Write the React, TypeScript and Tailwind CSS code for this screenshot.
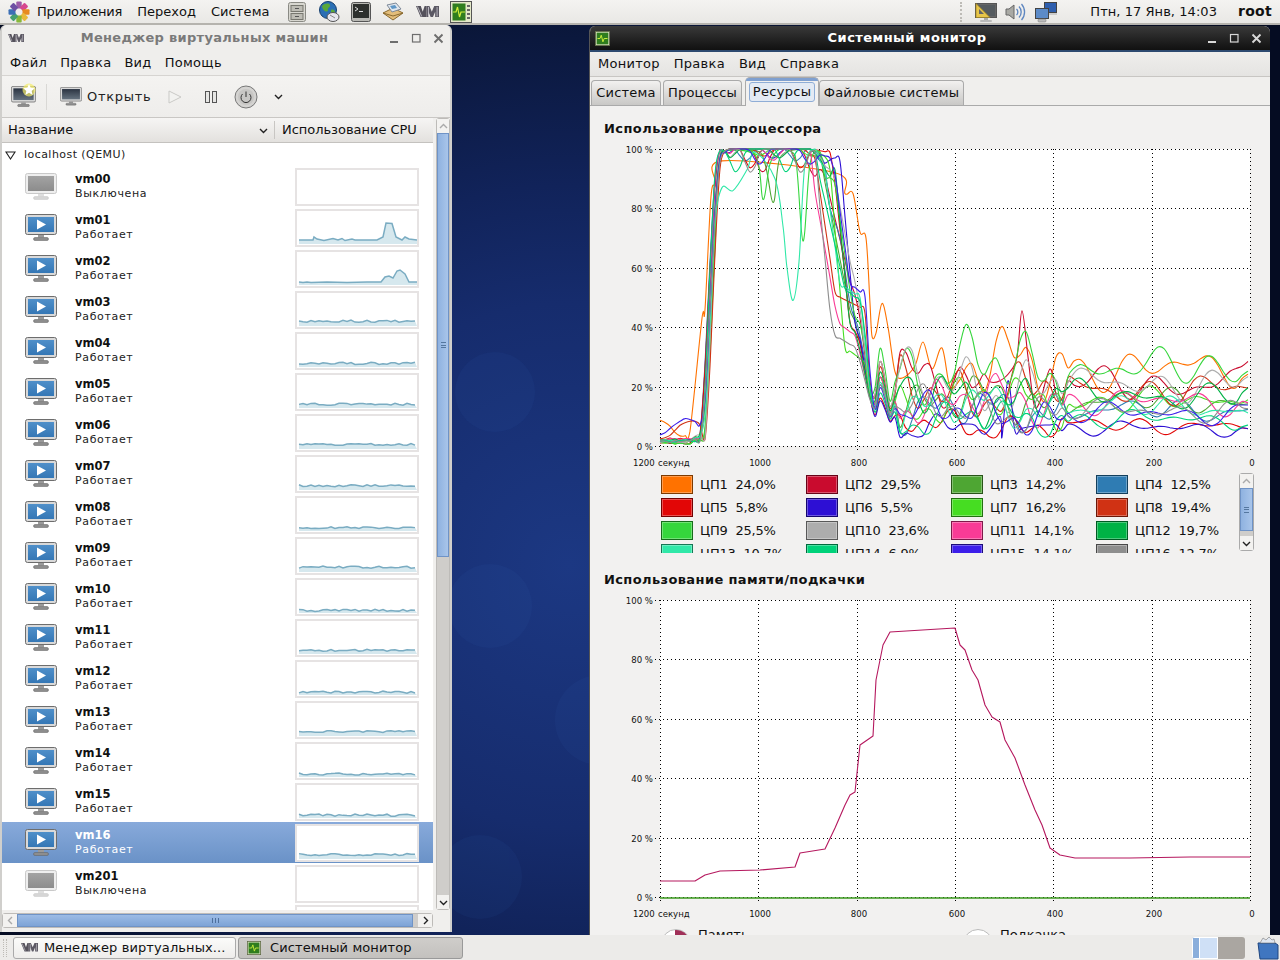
import React from "react";

type P = [number, number];

function rng(seed: number) {
  let a = seed * 2654435761 + 12345;
  return () => {
    a |= 0; a = (a + 0x6d2b79f5) | 0;
    let t = Math.imul(a ^ (a >>> 15), 1 | a);
    t = (t + Math.imul(t ^ (t >>> 7), 61 | t)) ^ t;
    return ((t ^ (t >>> 14)) >>> 0) / 4294967296;
  };
}

function smooth(pts: P[], minY = -1e9, maxY = 1e9) {
  let d = `M${pts[0][0]} ${pts[0][1]}`;
  const cl = (v: number) => Math.min(maxY, Math.max(minY, v));
  for (let i = 0; i < pts.length - 1; i++) {
    const p0 = pts[Math.max(0, i - 1)], p1 = pts[i], p2 = pts[i + 1], p3 = pts[Math.min(pts.length - 1, i + 2)];
    d += `C${(p1[0] + (p2[0] - p0[0]) / 6).toFixed(1)} ${cl(p1[1] + (p2[1] - p0[1]) / 6).toFixed(1)} ${(p2[0] - (p3[0] - p1[0]) / 6).toFixed(1)} ${cl(p2[1] - (p3[1] - p1[1]) / 6).toFixed(1)} ${p2[0]} ${p2[1]}`;
  }
  return d;
}

const cpus = [
  { label: "ЦП1", val: "24,0%", c: "#ff7200", sw: "bg-[#ff7200] border-[#7d3a00]", mean: 26, end: 24 },
  { label: "ЦП2", val: "29,5%", c: "#c90b2e", sw: "bg-[#c90b2e] border-[#660317]", mean: 21, end: 29.5 },
  { label: "ЦП3", val: "14,2%", c: "#4ea633", sw: "bg-[#4ea633] border-[#285418]", mean: 15, end: 14.2 },
  { label: "ЦП4", val: "12,5%", c: "#2f7cb3", sw: "bg-[#2f7cb3] border-[#133f5c]", mean: 12, end: 12.5 },
  { label: "ЦП5", val: "5,8%", c: "#e20606", sw: "bg-[#e20606] border-[#730202]", mean: 7, end: 5.8 },
  { label: "ЦП6", val: "5,5%", c: "#2d0fd4", sw: "bg-[#2d0fd4] border-[#14056e]", mean: 6, end: 5.5 },
  { label: "ЦП7", val: "16,2%", c: "#46dd22", sw: "bg-[#46dd22] border-[#217010]", mean: 15, end: 16.2 },
  { label: "ЦП8", val: "19,4%", c: "#d03214", sw: "bg-[#d03214] border-[#6b1708]", mean: 19, end: 19.4 },
  { label: "ЦП9", val: "25,5%", c: "#35d63c", sw: "bg-[#35d63c] border-[#176b1b]", mean: 26, end: 25.5 },
  { label: "ЦП10", val: "23,6%", c: "#adadad", sw: "bg-[#adadad] border-[#585858]", mean: 21, end: 23.6 },
  { label: "ЦП11", val: "14,1%", c: "#f93b96", sw: "bg-[#f93b96] border-[#7e1a4a]", mean: 15, end: 14.1 },
  { label: "ЦП12", val: "19,7%", c: "#00b245", sw: "bg-[#00b245] border-[#005a22]", mean: 17, end: 19.7 },
  { label: "ЦП13", val: "10,7%", c: "#30e8a8", sw: "bg-[#30e8a8] border-[#177555]", mean: 13, end: 10.7 },
  { label: "ЦП14", val: "6,9%", c: "#00d27a", sw: "bg-[#00d27a] border-[#006a3d]", mean: 9, end: 6.9 },
  { label: "ЦП15", val: "14,1%", c: "#3c1eea", sw: "bg-[#3c1eea] border-[#1c0c78]", mean: 11, end: 14.1 },
  { label: "ЦП16", val: "12,7%", c: "#8e8e8e", sw: "bg-[#8e8e8e] border-[#484848]", mean: 12, end: 12.7 },
];

const vy = (v: number) => 446 - (v / 100) * 297;

const pins: Record<number, P[]> = {
  0: [[690, 5], [702, 43], [705, 46], [711, 84], [716, 88], [722, 96], [835, 92], [845, 85], [853, 85], [860, 72], [866, 70], [870, 48], [872, 37], [876, 38], [882, 48], [888, 40], [895, 25], [903, 23], [915, 27], [923, 35], [932, 26], [942, 33], [950, 20]],
  12: [[722, 87], [733, 86], [747, 93], [755, 99], [775, 90], [783, 74], [787, 60], [793, 49], [799, 62], [805, 95], [815, 100]],
  8: [[722, 99], [755, 98], [763, 83], [770, 95], [780, 100], [795, 98], [803, 69], [810, 95], [820, 99]],
  2: [[722, 99], [760, 99], [773, 82], [780, 97], [800, 100]],
  1: [[1000, 22], [1010, 25], [1017, 30], [1022, 45.5], [1028, 30], [1034, 14], [1040, 15]],
  5: [[975, 7], [985, 4], [1000, 10], [1002, 3], [1008, 22], [1015, 5], [1022, 6], [1040, 7]],
  3: [[830, 80], [840, 70], [850, 48], [858, 40]],
};

function cpuPoints(i: number): P[] {
  const r = rng(i + 11);
  const c = cpus[i];
  const rise0 = 697 + r() * 8;
  const rise1 = 717 + r() * 6;
  const fall1 = 832 + r() * 24;
  const fall0 = fall1 - 14 - r() * 16;
  const plateauAmp = 1 + r() * 8;
  const drift = r() * 12;
  const ph1 = r() * 6, ph2 = r() * 6, ph3 = r() * 6;
  const low = 0.5 + r() * 1.5;
  const knee = 28 + r() * 26;
  const kneeEnd = Math.max(fall1 + 5, 856 + r() * 10);
  const pts: P[] = [];
  const pin = pins[i] || [];
  for (let x = 660; x <= 1250; x += x >= 900 ? 6 : 5) {
    if (pin.some((p) => Math.abs(p[0] - x) < 5)) continue;
    if (pin.length > 3 && x >= pin[0][0] && x <= pin[pin.length - 1][0]) continue;
    let v: number;
    if (x < rise0) {
      v = low + r() * 0.8 + (i % 7 === 0 ? 3 * Math.sin(x / 9 + ph1) + 4 : 0) + (x > 690 ? r() * 2 : 0);
    } else if (x < rise1) {
      const t = (x - rise0) / (rise1 - rise0);
      v = low + t * t * (3 - 2 * t) * (97 - low);
    } else if (x < fall0) {
      const s = Math.max(0, Math.sin(x / 8 + ph1));
      v = 100 - s * s * plateauAmp;
      if (x < 730) v = 100 - r() * 1.5;
      if (x > 810) v -= ((x - 810) / 30) * drift;
    } else if (x < fall1) {
      const t = (x - fall0) / (fall1 - fall0);
      v = (100 - drift * 0.6) * (1 - t) + (knee + 5) * t;
    } else if (x < kneeEnd) {
      v = knee + 5 - ((x - fall1) / (kneeEnd - fall1)) * 5;
    } else if (x < 872) {
      v = knee - ((x - kneeEnd) / Math.max(1, 872 - kneeEnd)) * (knee - 13);
    } else if (x < 900) {
      const bump = (1 - Math.cos(((x - 872) / 18) * Math.PI * 2)) / 2;
      v = 6 + c.mean * 0.35 + (x < 890 ? bump * (4 + c.mean * 0.55) : 0) + (x >= 890 ? (c.mean * 0.5 * (x - 890)) / 10 : 0);
    } else {
      const long = x >= 1065;
      const amp = long ? 4.5 : 9;
      const w = Math.sin(x / (long ? 7 : 4.6) + ph1) * 0.55 + Math.sin(x / 10 + ph2) * 0.6 + Math.sin(x / 27 + ph3) * 0.4;
      v = c.mean + w * amp * (0.25 + c.mean / 28);
      if (x > 1235) v = v + (c.end - v) * ((x - 1235) / 15);
      v = Math.max(3, v);
    }
    pts.push([x, vy(Math.min(100, Math.max(0, v)))]);
  }
  for (const p of pin) pts.push([p[0], vy(p[1])]);
  pts.sort((a, b) => a[0] - b[0]);
  return pts;
}

const memPts: P[] = [[660, 881], [695, 881], [705, 875], [720, 871], [760, 870], [795, 867], [800, 853], [825, 849], [835, 828], [845, 805], [850, 795], [855, 792], [860, 745], [873, 736], [876, 680], [883, 645], [890, 632], [955, 628], [960, 645], [965, 650], [972, 670], [978, 680], [985, 705], [992, 717], [1000, 722], [1005, 740], [1015, 758], [1025, 785], [1035, 810], [1042, 825], [1050, 848], [1060, 855], [1075, 858], [1130, 858], [1190, 857], [1250, 857]];

const xTicks: [number, string][] = [[758, "1000"], [857, "800"], [955, "600"], [1053, "400"], [1152, "200"], [1250, "0"]];

function ChartFrame({ top, children, ox, oy }: { top: number; children: React.ReactNode; ox: number; oy: number }) {
  const bottom = top + 297;
  const ys = [0, 20, 40, 60, 80, 100].map((v) => ({ v, y: Math.round(bottom - (v / 100) * 297) }));
  return (
    <svg width={670} height={330} className="block shrink-0" style={{ fontFamily: "'DejaVu Sans', sans-serif" }}>
      <g transform={`translate(${-ox},${-oy})`}>
        <rect x={660} y={top} width={590} height={297} fill="#fff" />
        <g stroke="#000" strokeWidth={1} strokeDasharray="1 3" shapeRendering="crispEdges">
          {ys.map((t) => <line key={t.v} x1={655} x2={1251} y1={t.y + 0.5} y2={t.y + 0.5} />)}
          <line x1={660.5} x2={660.5} y1={top} y2={bottom + 6} />
          {xTicks.map(([x]) => <line key={x} x1={x + 0.5} x2={x + 0.5} y1={top} y2={bottom + 6} />)}
        </g>
        {children}
        <g fontSize={9.5} fill="#111" style={{ fontStretch: "condensed" }}>
          {ys.map((t) => <text key={t.v} x={653} y={t.y + 4} textAnchor="end">{t.v} %</text>)}
          <text x={633} y={bottom + 20}>1200</text>
          <text x={658} y={bottom + 20}>секунд</text>
          {xTicks.map(([x, l]) => <text key={x} x={x + 2} y={bottom + 20} textAnchor="middle">{l}</text>)}
        </g>
      </g>
    </svg>
  );
}

function CpuChart() {
  return (
    <ChartFrame top={149} ox={590} oy={141}>
      <g fill="none" strokeWidth={1.1} strokeLinejoin="round">
        {cpus.map((c, i) => <path key={c.label} d={smooth(cpuPoints(i), 149, 446)} stroke={c.c} />)}
      </g>
    </ChartFrame>
  );
}

function MemChart() {
  return (
    <ChartFrame top={600} ox={590} oy={592}>
      <path d={"M" + memPts.map((p) => p.join(" ")).join("L")} fill="none" stroke="#b5185e" strokeWidth={1.1} strokeLinejoin="round" />
      <line x1={660} x2={1250} y1={898} y2={898} stroke="#3a9a1e" strokeWidth={1.3} />
    </ChartFrame>
  );
}

function Spark({ idx, off }: { idx: number; off?: boolean }) {
  const r = rng(idx + 101);
  let pts: P[] = [];
  if (idx === 1) {
    pts = [[2, 29], [16, 29], [17, 26], [20, 28], [27, 29.5], [36, 27.5], [41, 29], [45, 27.5], [48, 29.5], [55, 28], [58, 29], [80, 29], [86, 26], [89, 12], [95, 12.5], [99, 26], [105, 29], [108, 26], [112, 28], [120, 29]];
  } else if (idx === 2) {
    pts = [[2, 30], [6, 30.5], [10, 30], [14, 30.5], [30, 30], [50, 30.5], [70, 30], [84, 30], [88, 25], [92, 24], [96, 26], [100, 19], [103, 18], [108, 22], [112, 30], [120, 30]];
  } else if (!off) {
    const base = 28 + r() * 2.5;
    for (let x = 2; x <= 120; x += 4) pts.push([x, base + (r() - 0.5) * 2.2]);
  }
  const line = off ? "" : "M" + pts.map((p) => p.join(" ")).join("L");
  return (
    <div className="w-[124px] h-[38px] bg-white border-2 border-[#e6e3e3] shrink-0">
      {!off && (
        <svg width={120} height={34} className="block">
          <path d={`${line}L120 33L2 33Z`} fill="#d6e8ee" />
          <path d={line} fill="none" stroke="#7aacc2" strokeWidth={1.5} />
        </svg>
      )}
    </div>
  );
}

function VmIcon({ state, w = 32 }: { state: "on" | "off" | "dark"; w?: number }) {
  const on = state !== "off";
  const id = `scr-${state}`;
  const a = { on: "#4f8fc9", off: "#a3a3a3", dark: "#2b3442" }[state];
  const b = { on: "#3577b5", off: "#8c8c8c", dark: "#65727f" }[state];
  return (
    <svg width={w} height={(w * 27) / 32} viewBox="0 0 32 27" className="block">
      <defs>
        <linearGradient id={id} x1="0" y1="0" x2="0" y2="1">
          <stop offset="0" stopColor={a} />
          <stop offset="1" stopColor={b} />
        </linearGradient>
      </defs>
      <rect x={0.5} y={0.5} width={31} height={20} rx={2} fill={on ? "#d9d9d9" : "#eeeeee"} stroke={on ? "#6d6d6d" : "#c9c9c9"} />
      <rect x={3} y={3} width={26} height={15} fill={`url(#${id})`} />
      <rect x={13} y={21} width={6} height={2.5} fill={on ? "#9a9a9a" : "#dedede"} />
      <rect x={8.5} y={23.5} width={15} height={3} rx={1.5} fill={on ? "#8d8d8d" : "#d6d6d6"} stroke={on ? "#5f5f5f" : "#c8c8c8"} strokeWidth={0.5} />
      {state === "on" && <path d="M12 5.5l9 5-9 5z" fill="#fff" />}
    </svg>
  );
}

function VmLogo({ w = 16 }: { w?: number }) {
  return (
    <svg width={w} height={w * 0.5} viewBox="0 0 24 12" className="block">
      <path d="M0 0h5l2 6 2-6h2v12H9L8 12H5z" fill="#55525c" />
      <path d="M11 0h3l2.500 6L19 0h5v12h-4V6l-2.500 6h-2L13 6v6h-2z" fill="#5c5964" />
      <path d="M1.500 0.500L6 11M13 1v10M22 1v10" stroke="#c8c6ce" strokeWidth={0.9} fill="none" />
    </svg>
  );
}

function MonIcon({ s = 18 }: { s?: number }) {
  return (
    <svg width={s} height={s} viewBox="0 0 18 18" className="block">
      <rect x={0.5} y={0.5} width={17} height={17} fill="#dfe6c4" stroke="#5f6b45" />
      <rect x={2} y={2} width={14} height={14} fill="#2f7d1e" />
      <path d="M3 9h3l1.500-4 2 8 1.500-4h4" fill="none" stroke="#c8ec3a" strokeWidth={1.2} />
    </svg>
  );
}

function Flower() {
  const cols = ["#9c5aa8", "#d6478f", "#e88a1f", "#e9b93a", "#88b83a", "#46a070", "#3b6fb5", "#6e4fa3"];
  return (
    <svg width={22} height={22} viewBox="-11 -11 22 22" className="block">
      {cols.map((c, i) => (
        <rect key={c} x={-2.7} y={-10.5} width={5.4} height={7} rx={1} fill={c} transform={`rotate(${i * 45})`} />
      ))}
      <circle r={2.5} fill="#f0ecf0" />
    </svg>
  );
}

function PanelIcons() {
  return (
    <div className="flex items-center ml-[17px] gap-[11px]">
      <svg width={20} height={20} viewBox="0 0 20 20"><rect x={1.500} y={0.500} width={17} height={19} rx={2} fill="#d8d7d0" stroke="#8a8a84" /><rect x={4} y={3.500} width={12} height={6} fill="#bdbcb4" stroke="#77776f" /><rect x={4} y={11.500} width={12} height={6} fill="#bdbcb4" stroke="#77776f" /><rect x={8} y={6} width={4} height={1} fill="#555" /><rect x={8} y={14} width={4} height={1} fill="#555" /></svg>
      <svg width={22} height={22} viewBox="0 0 22 22"><circle cx={10} cy={9} r={8.500} fill="#2b6fb5" stroke="#17406e" /><path d="M4 5c3-3 7-3 8-1s-3 3-2 5-5 3-6-4zM13 9c2-1 4 0 4 2s-3 3-4 1z" fill="#5aa83a" /><ellipse cx={15} cy={16} rx={6} ry={4.500} fill="#e6e6ee" stroke="#555" /><path d="M12 14l5 3" stroke="#888" /></svg>
      <svg width={20} height={20} viewBox="0 0 20 20"><rect x={0.500} y={0.500} width={19} height={19} rx={2} fill="#b9b9b4" stroke="#555" /><rect x={2} y={2} width={16} height={14} fill="#2d302d" /><path d="M4 5l3 2-3 2" fill="none" stroke="#ddd" /><rect x={8} y={9} width={4} height={1} fill="#ddd" /></svg>
      <svg width={22} height={20} viewBox="0 0 22 20"><path d="M1 11l10-5 10 5-10 7z" fill="#e3bd7a" stroke="#8a6a30" /><path d="M5 3l9-2 5 6-9 3z" fill="#dfe6ee" stroke="#7f8a99" /><path d="M8 4l5-1 2 3-5 1z" fill="#5f97c7" /><path d="M1 11l10 3 10-3" fill="none" stroke="#8a6a30" /></svg>
      <div className="ml-[1px]"><VmLogo w={23} /></div>
      <svg width={22} height={22} viewBox="0 0 22 22"><rect x={0.500} y={0.500} width={21} height={21} fill="#e4e8c8" stroke="#555" /><rect x={2.500} y={2.500} width={13} height={17} fill="#2f7d1e" /><path d="M3 11h3l1.500-5 2 10 1.500-5h4" fill="none" stroke="#d4ef3a" strokeWidth={1.2} /><rect x={17} y={4} width={3} height={2} fill="#666" /><rect x={17} y={8} width={3} height={2} fill="#666" /><rect x={17} y={12} width={3} height={2} fill="#666" /><rect x={17} y={16} width={3} height={2} fill="#666" /></svg>
    </div>
  );
}

function TrayIcons() {
  return (
    <div className="flex items-center gap-[7px]">
      <div className="w-[3px] h-[20px] border-l-2 border-dotted border-[#bdbbb6] mr-[5px]" />
      <svg width={22} height={22} viewBox="0 0 22 22"><rect x={0.500} y={2.500} width={21} height={14} fill="#666" stroke="#555" /><rect x={2} y={4} width={18} height={11} fill="#555b5f" /><path d="M1 2.500v14h14z" fill="#e8c64a" stroke="#9b7f1e" strokeWidth={0.7} /><path d="M4 8v5h5z" fill="#666" /><rect x={9} y={17} width={4} height={2} fill="#aaa" /><rect x={5} y={19} width={12} height={2} rx={1} fill="#bbb" /></svg>
      <svg width={22} height={22} viewBox="0 0 22 22"><path d="M2 8h3l5-4v14l-5-4H2z" fill="#a9a9a4" stroke="#666" /><path d="M12.500 8a4 4 0 010 6M15 5.500a8 8 0 010 11M17.500 3a12 12 0 010 16" fill="none" stroke="#5d86c0" strokeWidth={1.3} /></svg>
      <svg width={24} height={22} viewBox="0 0 24 22" className="ml-[1px]"><rect x={10.500} y={1.500} width={12} height={10} fill="#2f5fae" stroke="#444" /><rect x={1.500} y={7.500} width={13} height={10} fill="#5c8bc8" stroke="#444" /><rect x={4} y={18} width={8} height={3} rx={1} fill="#bbb" stroke="#777" strokeWidth={0.5} /><rect x={15} y={12} width={8} height={2} fill="#ccc" /></svg>
    </div>
  );
}

function TitleButtons({ light }: { light?: boolean }) {
  const c = light ? "#d8d8d8" : "#6e6e6e";
  return (
    <div className="flex items-center gap-[11px] shrink-0">
      <svg width={11} height={11} viewBox="0 0 11 11"><rect x={1} y={8} width={8} height={2} fill={c} /></svg>
      <svg width={11} height={11} viewBox="0 0 11 11"><rect x={1.500} y={1.500} width={7.500} height={7.500} fill="none" stroke={c} strokeWidth={1.2} /></svg>
      <svg width={11} height={11} viewBox="0 0 11 11"><path d="M1.500 1.500l8 8M9.500 1.500l-8 8" stroke={c} strokeWidth={1.9} /></svg>
    </div>
  );
}

function Chevron({ dir, c = "#222" }: { dir: "u" | "d" | "l" | "r"; c?: string }) {
  const d = { u: "M2 7l3.500-3.500L9 7", d: "M2 4l3.500 3.500L9 4", l: "M7 2L3.500 5.500 7 9", r: "M4 2l3.500 3.500L4 9" }[dir];
  return <svg width={11} height={11} viewBox="0 0 11 11" className="block"><path d={d} fill="none" stroke={c} strokeWidth={1.4} /></svg>;
}

const vms = Array.from({ length: 17 }, (_, i) => ({ name: `vm${String(i).padStart(2, "0")}`, on: i > 0 })).concat([{ name: "vm201", on: false }]);

function VmRow({ name, on, idx, selected }: { name: string; on: boolean; idx: number; selected: boolean }) {
  return (
    <div className={`flex items-center h-[41px] shrink-0 pl-[23px] ${selected ? "bg-gradient-to-b from-[#88aadb] to-[#6a92c7]" : "bg-white"}`}>
      <div className="w-[50px] shrink-0"><VmIcon state={on ? "on" : "off"} /></div>
      <div className="flex-1 min-w-0">
        <div className={`text-[11.5px] h-[14px] leading-[12px] font-bold ${selected ? "text-white" : "text-[#111]"}`}>{name}</div>
        <div className={`text-[11px] leading-[14px] tracking-[0.65px] ${selected ? "text-white" : "text-[#222]"}`}>{on ? "Работает" : "Выключена"}</div>
      </div>
      <div className="mr-[14px]"><Spark idx={idx} off={!on} /></div>
    </div>
  );
}

function VmWindow() {
  return (
    <div className="absolute left-0 top-0 w-[452px] h-[907px] flex flex-col bg-[#f0efed] border-x-2 border-[#d0cfcc] rounded-t-[6px] overflow-hidden">
      <div className="h-[26px] shrink-0 flex items-center pl-[6px] pr-[6px] bg-[#efeeec]">
        <VmLogo w={16} />
        <div className="flex-1 text-center text-[13px] font-bold tracking-[0.3px] text-[#7a7a7a] pr-[4px]">Менеджер виртуальных машин</div>
        <TitleButtons />
      </div>
      <div className="h-[25px] shrink-0 flex items-center gap-[13px] pl-[8px] text-[13px] tracking-[0.3px] text-[#111] bg-[#efeeec] border-b border-[#d6d4d1]">
        <span>Файл</span><span>Правка</span><span>Вид</span><span>Помощь</span>
      </div>
      <div className="h-[42px] shrink-0 flex items-center pl-[9px] bg-gradient-to-b from-[#f4f3f1] to-[#eeedeb] border-b border-[#c9c7c4] text-[13px] text-[#222]">
        <div className="relative w-[25px]">
          <VmIcon state="dark" w={25} />
          <svg width={14} height={14} viewBox="0 0 14 14" className="absolute -top-[3px] left-[11px]"><circle cx={7} cy={7} r={6.500} fill="#f4ec6a" opacity={0.7} /><path d="M7 1l1.700 3.800 4 .4-3 2.700.9 4L7 9.800 3.400 11.900l.9-4-3-2.700 4-.4z" fill="#fff" /></svg>
        </div>
        <div className="w-px h-[26px] bg-[#d9d8d5] ml-[10px] mr-[13px]" />
        <VmIcon state="dark" w={22} />
        <span className="ml-[5px] tracking-[0.7px]">Открыть</span>
        <svg width={14} height={14} viewBox="0 0 14 14" className="ml-[17px]"><path d="M1 1l12 6-12 6z" fill="#f2f2f0" stroke="#c9c9c6" /></svg>
        <svg width={14} height={14} viewBox="0 0 14 14" className="ml-[22px]"><rect x={1.500} y={1.500} width={4} height={11} fill="#e6e6e4" stroke="#555" /><rect x={8.500} y={1.500} width={4} height={11} fill="#e6e6e4" stroke="#555" /></svg>
        <svg width={24} height={24} viewBox="0 0 24 24" className="ml-[16px]"><circle cx={12} cy={12} r={11} fill="#d4d3d1" stroke="#777" /><circle cx={12} cy={12} r={8} fill="#c7c6c4" /><path d="M8.500 9a5 5 0 107 0M12 6.500V12" fill="none" stroke="#333" strokeWidth={1} /></svg>
        <div className="ml-[15px]"><Chevron dir="d" /></div>
      </div>
      <div className="flex flex-1 min-h-0">
        <div className="flex flex-col w-[431px] shrink-0 min-h-0">
          <div className="h-[25px] shrink-0 flex items-center text-[13px] text-[#111] bg-gradient-to-b from-[#f6f5f4] to-[#e3e1de] border-b border-[#c4c2bf]">
            <span className="pl-[6px] flex-1">Название</span>
            <div className="mr-[5px]"><Chevron dir="d" /></div>
            <div className="w-px h-[18px] bg-[#c8c6c3]" />
            <span className="w-[158px] pl-[7px] tracking-[-0.03px]">Использование CPU</span>
          </div>
          <div className="flex-1 min-h-0 overflow-hidden bg-white flex flex-col">
            <div className="h-[23px] shrink-0 flex items-center pl-[3px] pt-[1px] text-[11px] tracking-[0.45px] text-[#222]">
              <svg width={11} height={9} viewBox="0 0 11 9" className="mr-[8px]"><path d="M1 1h9L5.500 8z" fill="none" stroke="#222" strokeWidth={1.1} /></svg>
              localhost (QEMU)
            </div>
            {vms.map((v, i) => <VmRow key={v.name} name={v.name} on={v.on} idx={i} selected={i === 16} />)}
            <div className="h-[41px] shrink-0 pl-[293px] pt-[1px] bg-white"><Spark idx={99} off /></div>
          </div>
        </div>
        <div className="ml-[3px] w-[15px] flex flex-col bg-[#cfcdca] border border-[#bdbbb8] rounded-[3px]">
          <div className="h-[14px] bg-[#f3f2f0] flex items-center justify-center shrink-0"><Chevron dir="u" c="#aaa" /></div>
          <div className="h-[424px] bg-gradient-to-r from-[#8fb2e0] to-[#a9c5ea] border border-[#6f93c6] shrink-0 flex items-center justify-center">
            <div className="w-[5px] h-[6px] border-y border-[#55779f] flex items-center"><div className="w-full h-px bg-[#55779f]" /></div>
          </div>
          <div className="flex-1" />
          <div className="h-[14px] bg-[#f3f2f0] flex items-center justify-center shrink-0"><Chevron dir="d" /></div>
        </div>
      </div>
      <div className="h-[22px] shrink-0 pt-[3px] pb-[4px] pr-[17px]">
        <div className="h-full flex bg-[#cfcdca] border border-[#bdbbb8] rounded-[3px]">
          <div className="w-[14px] bg-[#f3f2f0] flex items-center justify-center shrink-0"><Chevron dir="l" c="#aaa" /></div>
          <div className="w-[396px] bg-gradient-to-b from-[#9cbce6] to-[#7da3d6] border border-[#6f93c6] flex items-center justify-center gap-[1px]">
            <div className="w-px h-[5px] bg-[#4d6f9c]" /><div className="w-px h-[5px] bg-[#4d6f9c] mx-[1px]" /><div className="w-px h-[5px] bg-[#4d6f9c]" />
          </div>
          <div className="flex-1" />
          <div className="w-[14px] bg-[#f3f2f0] flex items-center justify-center shrink-0"><Chevron dir="r" /></div>
        </div>
      </div>
    </div>
  );
}

function Tab({ label, active, w }: { label: string; active?: boolean; w: string }) {
  if (active) {
    return (
      <div className={`${w} h-[29px] shrink-0 rounded-t-[5px] border border-b-0 border-[#aaa] bg-[#f2f1f0] relative`}>
        <div className="h-[3px] rounded-t-[4px] bg-[#7fa0d0]" />
        <div className="mx-[3px] mt-[1px] h-[20px] rounded-[3px] border border-[#8fadd6] bg-[#e3eaf4] flex items-center justify-center text-[13px] tracking-[0.3px] text-[#111]">{label}</div>
      </div>
    );
  }
  return (
    <div className={`${w} h-[25px] shrink-0 rounded-t-[4px] border border-[#aaa] border-b-0 bg-gradient-to-b from-[#f2f1f0] to-[#c9c8c6] flex items-center justify-center text-[13px] tracking-[0.2px] text-[#111]`}>{label}</div>
  );
}

function MonitorWindow() {
  return (
    <div className="absolute left-[589px] top-[1px] w-[681px] h-[930px] flex flex-col bg-[#f0efed] border-l border-[#555] rounded-t-[6px] overflow-hidden">
      <div className="h-[26px] shrink-0 flex items-center pl-[5px] pr-[8px] bg-gradient-to-b from-[#3a3a3a] to-[#111] border-b-2 border-[#2d4a70]">
        <MonIcon s={15} />
        <div className="flex-1 text-center text-[13px] font-bold tracking-[0.45px] text-white pr-[3px]">Системный монитор</div>
        <TitleButtons light />
      </div>
      <div className="h-[25px] shrink-0 flex items-center gap-[14px] pl-[8px] text-[13px] tracking-[0.27px] text-[#111] bg-gradient-to-b from-[#efeeec] to-[#e5e4e2] border-b border-[#c8c6c3]">
        <span>Монитор</span><span>Правка</span><span>Вид</span><span>Справка</span>
      </div>
      <div className="h-[29px] shrink-0 flex items-end pl-[1px] gap-[2px] border-b border-[#aaa]">
        <Tab label="Система" w="w-[70px]" />
        <Tab label="Процессы" w="w-[79px]" />
        <div className="ml-[1px] -mb-px"><Tab label="Ресурсы" active w="w-[74px]" /></div>
        <div className="-ml-[2px]"><Tab label="Файловые системы" w="w-[145px]" /></div>
      </div>
      <div className="flex-1 min-h-0 overflow-hidden bg-[#f2f1f0] flex flex-col">
        <h2 className="ml-[14px] mt-[14px] mb-[3px] h-[18px] leading-[18px] text-[13px] font-bold tracking-[0.43px] text-[#111]">Использование процессора</h2>
        <CpuChart />
        <div className="flex ml-[71px] mt-[2px] h-[80px] shrink-0">
          <div className="w-[578px] overflow-hidden grid grid-cols-[145px_145px_145px_145px] auto-rows-[23px] content-start">
            {cpus.map((c) => (
              <div key={c.label} className="flex items-center h-[23px] text-[13px] tracking-[-0.2px] text-[#111]">
                <div className={`w-[32px] h-[19px] border shrink-0 shadow-[inset_0_0_0_1px_rgba(255,255,255,0.3)] ${c.sw}`} />
                <span className="ml-[7px] whitespace-pre">{c.label}  {c.val}</span>
              </div>
            ))}
          </div>
          <div className="w-[15px] h-[78px] flex flex-col bg-[#cfcdca] border border-[#aaa] rounded-[3px]">
            <div className="h-[14px] bg-[#f3f2f0] flex items-center justify-center shrink-0"><Chevron dir="u" c="#aaa" /></div>
            <div className="h-[43px] bg-gradient-to-r from-[#8fb2e0] to-[#a9c5ea] border border-[#6f93c6] flex items-center justify-center">
              <div className="w-[5px] h-[6px] border-y border-[#55779f] flex items-center"><div className="w-full h-px bg-[#55779f]" /></div>
            </div>
            <div className="flex-1" />
            <div className="h-[14px] bg-[#f3f2f0] flex items-center justify-center shrink-0"><Chevron dir="d" /></div>
          </div>
        </div>
        <h2 className="ml-[14px] mt-[18px] mb-[3px] h-[18px] leading-[18px] text-[13px] font-bold tracking-[0.38px] text-[#111]">Использование памяти/подкачки</h2>
        <MemChart />
        <div className="flex items-start mt-[3px] ml-[71px] text-[13px] text-[#111]">
          <div className="w-[30px] h-[30px] mt-[4px] rounded-full border border-[#bbb] bg-white shrink-0 overflow-hidden">
            <div className="w-[14px] h-[6px] ml-[13px] bg-[#a03058]" />
          </div>
          <span className="ml-[7px] w-[265px]">Память</span>
          <div className="w-[30px] h-[30px] mt-[4px] rounded-full border border-[#bbb] bg-white shrink-0" />
          <span className="ml-[7px]">Подкачка</span>
        </div>
      </div>
    </div>
  );
}

function Wallpaper() {
  return (
    <svg className="absolute inset-0" width={1280} height={910}>
      <defs>
        <radialGradient id="wp" gradientUnits="userSpaceOnUse" cx={570} cy={540} r={690}>
          <stop offset="0" stopColor="#1c3883" />
          <stop offset="0.38" stopColor="#162c6d" />
          <stop offset="0.55" stopColor="#11235a" />
          <stop offset="0.8" stopColor="#0a1638" />
          <stop offset="1" stopColor="#050c22" />
        </radialGradient>
      </defs>
      <rect width={1280} height={910} fill="url(#wp)" />
      <g fill="#3a6cc0" opacity={0.07}>
        <circle cx={495} cy={367} r={40} />
        <circle cx={600} cy={695} r={45} />
        <circle cx={480} cy={852} r={42} />
        <circle cx={490} cy={581} r={42} />
      </g>
    </svg>
  );
}

export default function App() {
  return (
    <div className="w-[1280px] h-[960px] overflow-hidden flex flex-col font-['DejaVu_Sans',sans-serif] bg-[#0b1c4a]">
      <div className="h-[25px] shrink-0 flex items-center bg-gradient-to-b from-[#f4f3f1] to-[#e9e8e5] border-b-2 border-[#b5b3ae] pl-[8px] pr-[8px] text-[13px] text-[#111]">
        <Flower />
        <span className="ml-[7px] tracking-[-0.2px]">Приложения</span>
        <span className="ml-[15px]">Переход</span>
        <span className="ml-[15px] tracking-[0.1px]">Система</span>
        <PanelIcons />
        <div className="flex-1" />
        <TrayIcons />
        <span className="ml-[32px] tracking-[0.05px]">Птн, 17 Янв, 14:03</span>
        <span className="ml-[21px] text-[14px] font-bold tracking-[0.3px]">root</span>
      </div>
      <div className="relative h-[910px] shrink-0 overflow-hidden">
        <Wallpaper />
        <VmWindow />
        <MonitorWindow />
      </div>
      <div className="h-[25px] shrink-0 flex items-center bg-[#ecebe9] pl-[3px] text-[13px] tracking-[0.1px] text-[#111] relative">
        <div className="w-[4px] h-[18px] border-x border-dotted border-[#bdbbb6] mr-[6px]" />
        <div className="w-[223px] h-[22px] flex items-center pl-[7px] rounded-[3px] border border-[#aaa] bg-gradient-to-b from-[#fbfbfa] to-[#eeedeb]">
          <VmLogo w={17} />
          <span className="ml-[6px] whitespace-nowrap">Менеджер виртуальных...</span>
        </div>
        <div className="ml-[2px] w-[225px] h-[22px] flex items-center pl-[8px] rounded-[3px] border border-[#999] bg-gradient-to-b from-[#cfcdca] to-[#c3c1be]">
          <MonIcon s={14} />
          <span className="ml-[9px] whitespace-nowrap">Системный монитор</span>
        </div>
        <div className="flex-1" />
        <div className="w-[53px] h-[22px] flex rounded-[3px] overflow-hidden bg-[#aaa6a1] mr-[12px]">
          <div className="w-[26px] flex border border-white bg-[#cfe0f6]">
            <div className="w-[7px] h-full bg-[#8aaedb] border-r border-white" />
          </div>
        </div>
        <svg width={23} height={24} viewBox="0 0 23 24" className="shrink-0"><path d="M1 7h17l3 2v14H3z" fill="#3f76c0" stroke="#1f4680" /><path d="M3 7l3-5 3 2 3-3 3 3 2-1 1 4z" fill="#dfe6f0" stroke="#777" strokeWidth={0.6} /></svg>
      </div>
    </div>
  );
}
